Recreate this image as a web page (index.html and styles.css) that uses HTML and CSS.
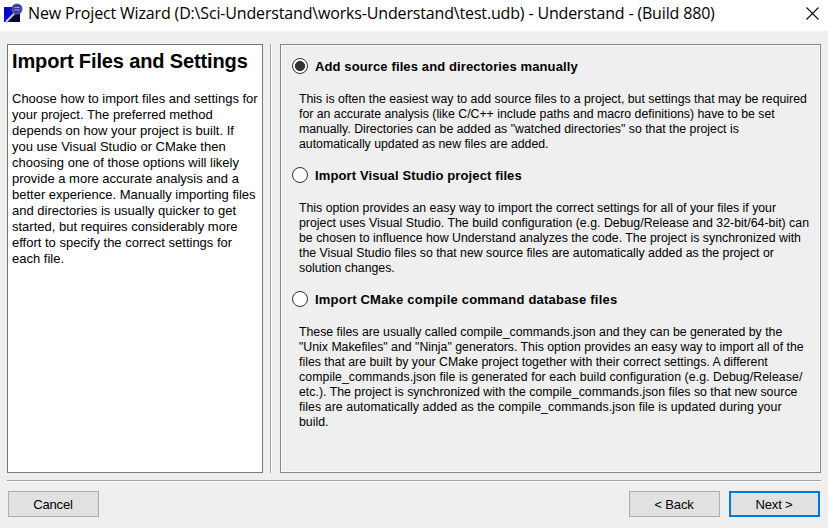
FILE: index.html
```html
<!DOCTYPE html>
<html lang="en">
<head>
<meta charset="utf-8">
<title>New Project Wizard</title>
<link rel="stylesheet" href="styles.css">
</head>
<body>
<header class="titlebar">
  <svg class="app-icon" viewBox="0 0 20 20" width="20" height="20">
    <path d="M1 4h8v5h8v10H1z" fill="#10106c"/>
    <path d="M1 4h8v7l-5 7H1z" fill="#0808cc"/>
    <path d="M5 19L12 11h5v8z" fill="#070730"/>
    <path d="M3 19l9-9" stroke="#dedbe8" stroke-width="2.200"/>
    <path d="M4 19.500l8-9" stroke="#554b75" stroke-width=".7"/>
    <circle cx="14" cy="6" r="4.800" fill="#3436a8" stroke="#56548c" stroke-width="1.500"/>
    <path d="M11.500 4.500h5M11 7h6" stroke="#a3a7ee" stroke-width="1"/>
  </svg>
  <h1 class="window-title">New Project Wizard (D:\Sci-Understand\works-Understand\test.udb) - Understand - (Build 880)</h1>
  <svg class="close" viewBox="0 0 13 13" width="13" height="13"><path d="M.5.5l12 12M12.500.5l-12 12" stroke="#111" stroke-width="1.200"/></svg>
</header>
<main class="content">
  <aside class="info">
    <h2>Import Files and Settings</h2>
    <p>Choose how to import files and settings for<br>your project. The preferred method<br>depends on how your project is built. If<br>you use Visual Studio or CMake then<br>choosing one of those options will likely<br>provide a more accurate analysis and a<br>better experience. Manually importing files<br>and directories is usually quicker to get<br>started, but requires considerably more<br>effort to specify the correct settings for<br>each file.</p>
  </aside>
  <div class="splitter"></div>
  <section class="options">
    <div class="option">
      <label><span class="radio checked"></span><span class="name">Add source files and directories manually</span></label>
      <p>This is often the easiest way to add source files to a project, but settings that may be required<br>for an accurate analysis (like C/C++ include paths and macro definitions) have to be set<br>manually. Directories can be added as "watched directories" so that the project is<br>automatically updated as new files are added.</p>
    </div>
    <div class="option">
      <label><span class="radio"></span><span class="name">Import Visual Studio project files</span></label>
      <p>This option provides an easy way to import the correct settings for all of your files if your<br><span class="wide">project uses Visual Studio. The build configuration (e.g. Debug/Release and 32-bit/64-bit) can</span><br><span class="wide">be chosen to influence how Understand analyzes the code. The project is synchronized with</span><br>the Visual Studio files so that new source files are automatically added as the project or<br>solution changes.</p>
    </div>
    <div class="option">
      <label><span class="radio"></span><span class="name wider-name">Import CMake compile command database files</span></label>
      <p>These files are usually called compile_commands.json and they can be generated by the<br>"Unix Makefiles" and "Ninja" generators. This option provides an easy way to import all of the<br>files that are built by your CMake project together with their correct settings. A different<br><span class="wider">compile_commands.json file is generated for each build configuration (e.g. Debug/Release/</span><br><span class="wide">etc.). The project is synchronized with the compile_commands.json files so that new source</span><br><span class="wider">files are automatically added as the compile_commands.json file is updated during your</span><br>build.</p>
    </div>
  </section>
</main>
<footer class="actions">
  <button class="btn">Cancel</button>
  <span class="spacer"></span>
  <button class="btn">&lt; Back</button>
  <button class="btn primary">Next &gt;</button>
</footer>
</body>
</html>
```
FILE: styles.css
```css
* { box-sizing: border-box; }
body {
  margin: 0;
  width: 828px;
  height: 528px;
  overflow: hidden;
  display: flex;
  flex-direction: column;
  background: #efefef;
  color: #000;
  font: 12px "Liberation Sans", Arial, sans-serif;
}
h1, h2, p { margin: 0; }
.titlebar {
  height: 31px;
  padding: 0 9px 5px 3px;
  display: flex;
  align-items: center;
  background: #fff;
}
.app-icon { margin-right: 5px; }
.window-title {
  flex: 1;
  font: 400 16px/24px "Open Sans", "Noto Sans", sans-serif;
  letter-spacing: -0.16px;
  white-space: nowrap;
}
.content {
  height: 429px;
  margin: 13px 7px 0;
  display: flex;
}
.info {
  width: 256px;
  padding: 4px 0 0 4px;
  background: #fff;
  border: 1px solid #777;
  font-size: 13px;
  line-height: 16px;
  white-space: nowrap;
}
.info h2 { font-size: 20px; line-height: 25px; margin-bottom: 17px; letter-spacing: -0.13px; }
.splitter {
  width: 2px;
  margin: 0 8px 0 7px;
  background: #a0a0a0;
  border-right: 1px solid #fff;
}
.options {
  flex: 1;
  padding: 12px 0 0 10px;
  border: 1px solid #828790;
  box-shadow: inset 0 0 0 1px #fafafa;
  white-space: nowrap;
}
.option label { display: flex; align-items: center; height: 18px; }
.option p { margin: 17px 0 14px 8px; font-size: 12.3px; line-height: 15px; }
.option p span { line-height: 15px; }
.radio {
  width: 16px;
  height: 16px;
  margin: 0 7px 0 1px;
  border: 1px solid #333;
  border-radius: 50%;
  background: #fff;
}
.radio.checked { background: radial-gradient(circle, #333 4.700px, #fff 5.300px); }
.name { font-size: 13px; font-weight: 700; letter-spacing: 0.12px; }
.wide { letter-spacing: 0.02px; }
.wider { letter-spacing: 0.08px; }
.wider-name { letter-spacing: 0.21px; }
.actions {
  height: 48px;
  margin: 7px 7px 0;
  padding: 9px 1px 0;
  display: flex;
  gap: 9px;
  border-top: 1px solid #a0a0a0;
  box-shadow: inset 0 1px #fff;
}
.spacer { flex: 1; }
.btn {
  width: 91px;
  height: 26px;
  margin-top: 1px;
  padding: 0 1px 0 0;
  border: 1px solid #adadad;
  background: #e1e1e1;
  color: #000;
  font: 13px "Liberation Sans", Arial, sans-serif;
  letter-spacing: -0.15px;
}
.btn.primary { border: 2px solid #0078d7; }
```
